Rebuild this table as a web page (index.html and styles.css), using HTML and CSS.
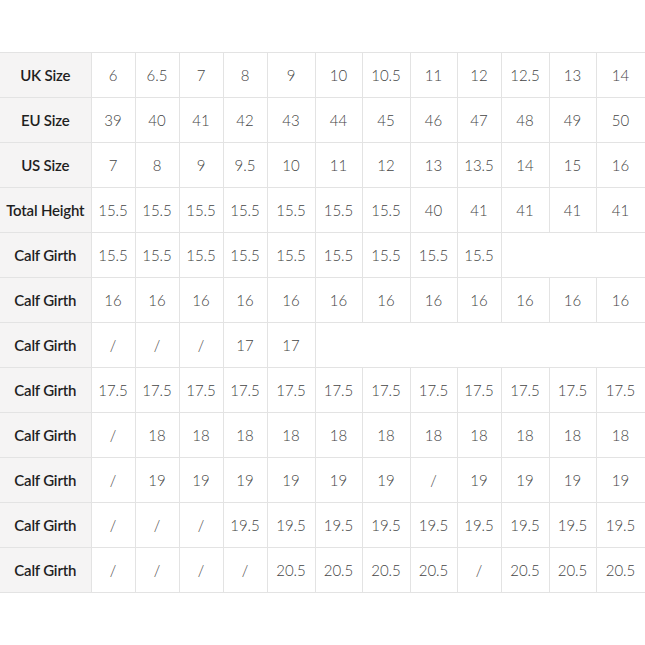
FILE: index.html
```html
<!DOCTYPE html>
<html>
<head>
<meta charset="utf-8">
<link rel="stylesheet" href="styles.css">
</head>
<body>
<table class="size-table">
  <colgroup>
    <col class="c-head">
    <col class="c44"><col class="c44"><col class="c44"><col class="c44">
    <col class="c48"><col class="c47"><col class="c48"><col class="c47"><col class="c44"><col class="c48"><col class="c47"><col class="c-last">
  </colgroup>
  <tbody>
    <tr><th>UK Size</th><td>6</td><td>6.5</td><td>7</td><td>8</td><td>9</td><td>10</td><td>10.5</td><td>11</td><td>12</td><td>12.5</td><td>13</td><td>14</td></tr>
    <tr><th>EU Size</th><td>39</td><td>40</td><td>41</td><td>42</td><td>43</td><td>44</td><td>45</td><td>46</td><td>47</td><td>48</td><td>49</td><td>50</td></tr>
    <tr><th>US Size</th><td>7</td><td>8</td><td>9</td><td>9.5</td><td>10</td><td>11</td><td>12</td><td>13</td><td>13.5</td><td>14</td><td>15</td><td>16</td></tr>
    <tr><th>Total Height</th><td>15.5</td><td>15.5</td><td>15.5</td><td>15.5</td><td>15.5</td><td>15.5</td><td>15.5</td><td>40</td><td>41</td><td>41</td><td>41</td><td>41</td></tr>
    <tr><th>Calf Girth</th><td>15.5</td><td>15.5</td><td>15.5</td><td>15.5</td><td>15.5</td><td>15.5</td><td>15.5</td><td>15.5</td><td>15.5</td><td colspan="3"></td></tr>
    <tr><th>Calf Girth</th><td>16</td><td>16</td><td>16</td><td>16</td><td>16</td><td>16</td><td>16</td><td>16</td><td>16</td><td>16</td><td>16</td><td>16</td></tr>
    <tr><th>Calf Girth</th><td>/</td><td>/</td><td>/</td><td>17</td><td>17</td><td colspan="7"></td></tr>
    <tr><th>Calf Girth</th><td>17.5</td><td>17.5</td><td>17.5</td><td>17.5</td><td>17.5</td><td>17.5</td><td>17.5</td><td>17.5</td><td>17.5</td><td>17.5</td><td>17.5</td><td>17.5</td></tr>
    <tr><th>Calf Girth</th><td>/</td><td>18</td><td>18</td><td>18</td><td>18</td><td>18</td><td>18</td><td>18</td><td>18</td><td>18</td><td>18</td><td>18</td></tr>
    <tr><th>Calf Girth</th><td>/</td><td>19</td><td>19</td><td>19</td><td>19</td><td>19</td><td>19</td><td>/</td><td>19</td><td>19</td><td>19</td><td>19</td></tr>
    <tr><th>Calf Girth</th><td>/</td><td>/</td><td>/</td><td>19.5</td><td>19.5</td><td>19.5</td><td>19.5</td><td>19.5</td><td>19.5</td><td>19.5</td><td>19.5</td><td>19.5</td></tr>
    <tr><th>Calf Girth</th><td>/</td><td>/</td><td>/</td><td>/</td><td>20.5</td><td>20.5</td><td>20.5</td><td>20.5</td><td>/</td><td>20.5</td><td>20.5</td><td>20.5</td></tr>
  </tbody>
</table>
</body>
</html>
```

FILE: styles.css
```css
html, body {
  margin: 0;
  padding: 0;
  background: #ffffff;
  overflow: hidden;
}
body {
  padding-top: 52px;
  font-family: Lato, "Open Sans", sans-serif;
}
.size-table {
  border-collapse: collapse;
  table-layout: fixed;
  width: 645px;
}
.c-head { width: 91px; }
.c44 { width: 44px; }
.c47 { width: 47px; }
.c48 { width: 48px; }
.c-last { width: 49px; }
.size-table th,
.size-table td {
  height: 44px;
  padding: 0;
  border: 1px solid #e3e3e3;
  text-align: center;
  vertical-align: middle;
  white-space: nowrap;
}
.size-table th {
  border-left: none;
  background: #f5f4f4;
  color: #1f1f1f;
  font-weight: 600;
  font-size: 15px;
  letter-spacing: -0.2px;
}
.size-table td {
  color: #444444;
  font-weight: 300;
  font-size: 15px;
}
```
